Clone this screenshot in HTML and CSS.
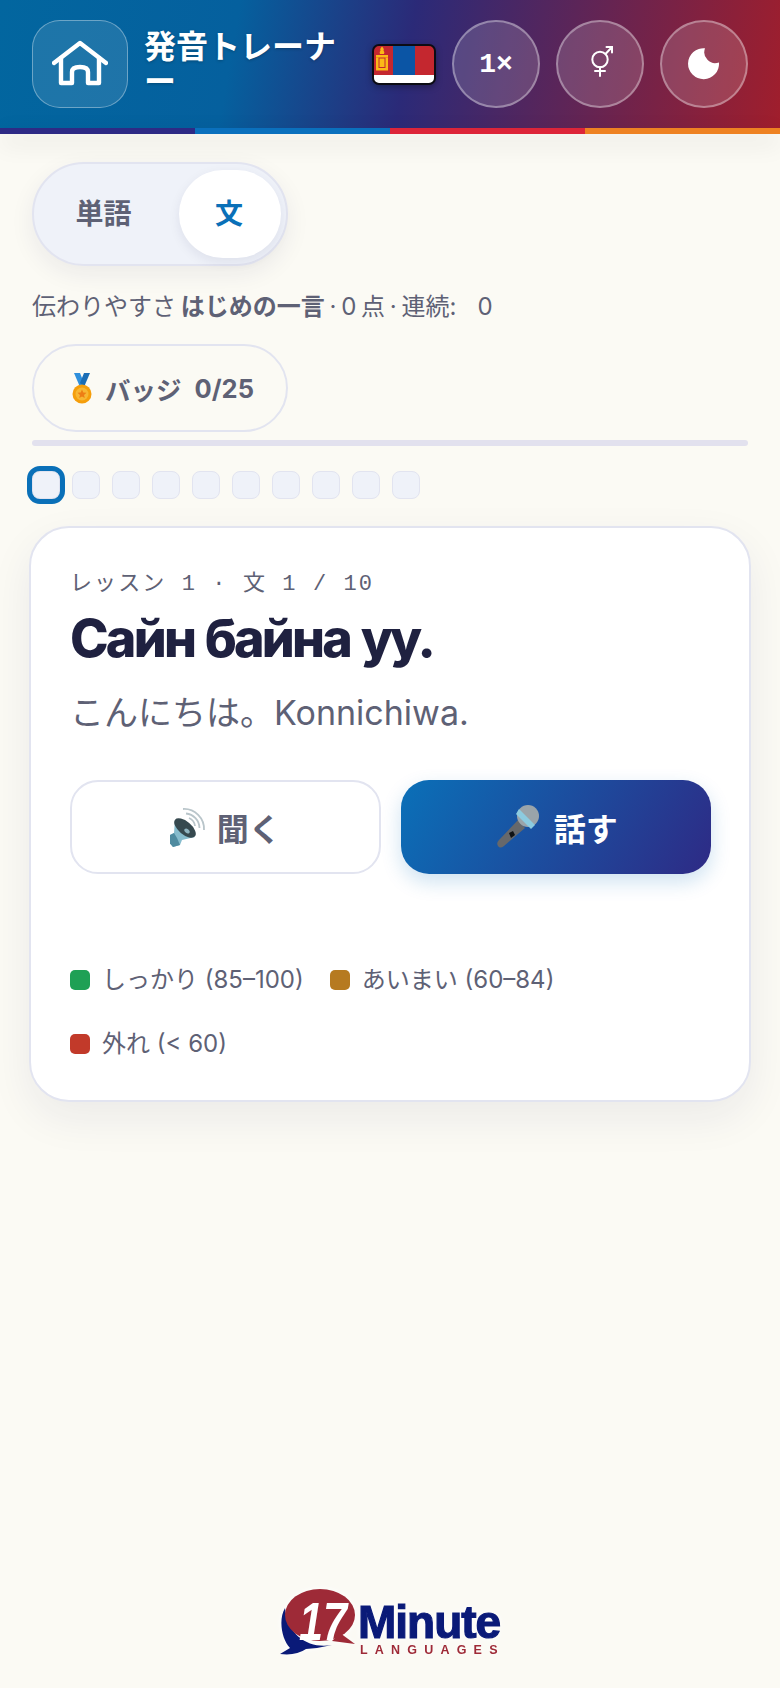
FILE: index.html
```html
<!DOCTYPE html>
<html lang="ja">
<head>
    <meta charset="UTF-8">
    <meta name="viewport" content="width=device-width, initial-scale=1.0">
    <title>発音トレーナー</title>
    <link rel="stylesheet" href="styles.css">
</head>
<body>

<!-- Header -->
<header class="app-header">
    <a href="#" class="home-btn" aria-label="ホーム">
        <svg width="56" height="48" viewBox="0 0 56 48" fill="none" stroke="#fff" stroke-width="4.400" stroke-linecap="round" stroke-linejoin="round">
            <path d="M2 23 L28 3 L54 23"/>
            <path d="M9 18 V43 H20 V32 Q20 27 28 27 Q36 27 36 32 V43 H47 V18"/>
        </svg>
    </a>
    <h1 class="app-title">発音トレーナー</h1>
    <svg class="flag" width="64" height="41" viewBox="0 0 64 41">
        <rect x="1" y="1" width="62" height="39" rx="6" fill="#fff"/>
        <path d="M7 1 H21 V31 H1 V7 Q1 1 7 1 Z" fill="#c4272f"/>
        <rect x="21" y="1" width="22" height="30" fill="#0b55a5"/>
        <path d="M43 1 H57 Q63 1 63 7 V31 H43 Z" fill="#c4272f"/>
        <g fill="#fbb917">
            <path d="M10 2.500 Q12.500 5 11.500 6.500 Q13 8 12 10 H8 Q7 8 8.500 6.500 Q7.500 5 10 2.500 Z"/>
            <rect x="4" y="11" width="12" height="2.500"/>
            <rect x="4" y="24" width="12" height="2.500"/>
            <rect x="4" y="13.500" width="2.500" height="10.500"/>
            <rect x="13.500" y="13.500" width="2.500" height="10.500"/>
            <rect x="7.500" y="14.500" width="5" height="8.500"/>
        </g>
        <rect x="1" y="1" width="62" height="39" rx="6" fill="none" stroke="#0c0c14" stroke-width="2"/>
    </svg>
    <button class="round-btn speed-btn">1×</button>
    <button class="round-btn" aria-label="性別">
        <svg width="40" height="44" viewBox="0 0 40 44" fill="none" stroke="#fff" stroke-width="2" stroke-linecap="round">
            <circle cx="20" cy="17.500" r="7.700"/>
            <path d="M20 25 V34 M15 29 H25"/>
            <path d="M25.500 12 L32 5 M26.500 5 H32 V10.500"/>
        </svg>
    </button>
    <button class="round-btn" aria-label="ダークモード">
        <svg width="32" height="32" viewBox="0 0 32 32">
            <path d="M17 .3 A15.500 15.500 0 1 0 31 14.500 A11 11 0 0 1 17 .3 Z" fill="#fff"/>
        </svg>
    </button>
</header>
<div class="stripe">
    <span class="s1"></span><span class="s2"></span><span class="s3"></span><span class="s4"></span>
</div>

<main class="content">
    <!-- Mode switch -->
    <div class="mode-toggle">
        <button class="mode-btn">単語</button>
        <button class="mode-btn active">文</button>
    </div>

    <p class="stats">伝わりやすさ <b>はじめの一言</b> · 0 点 · 連続:<span class="streak">0</span></p>

    <button class="badge-btn">
        <svg width="20" height="31" viewBox="0 0 20 31">
            <path d="M2 0 H8 L12 10 L8 14 Z" fill="#2f8fdc"/>
            <path d="M18 0 H12 L8 10 L12 14 Z" fill="#1a6db5"/>
            <circle cx="10" cy="21" r="9.500" fill="#f59e0b"/>
            <circle cx="10" cy="21" r="6.500" fill="#f7b733"/>
            <path d="M10 16.500 L11.300 19.500 L14.500 19.800 L12 22 L12.800 25 L10 23.400 L7.200 25 L8 22 L5.500 19.800 L8.700 19.500 Z" fill="#ee7d14"/>
        </svg>
        <span>バッジ</span><span>0/25</span>
    </button>

    <div class="progress"></div>

    <div class="steps">
        <span class="step current"></span>
        <span class="step"></span>
        <span class="step"></span>
        <span class="step"></span>
        <span class="step"></span>
        <span class="step"></span>
        <span class="step"></span>
        <span class="step"></span>
        <span class="step"></span>
        <span class="step"></span>
    </div>

    <!-- Card -->
    <section class="card">
        <div class="kicker">レッスン 1 · 文 1 / 10</div>
        <h2 class="phrase">Сайн байна уу.</h2>
        <p class="translation">こんにちは。Konnichiwa.</p>

        <div class="actions">
            <button class="action listen">
                <svg width="40" height="44" viewBox="2 -3 40 44" fill="none">
                    <path d="M15 1 A20 20 0 0 1 36 22" stroke="#b9c5ca" stroke-width="1.800"/>
                    <path d="M18 5.500 A15 15 0 0 1 31.500 20" stroke="#b9c5ca" stroke-width="1.800"/>
                    <path d="M21 10 A10 10 0 0 1 27 18" stroke="#b9c5ca" stroke-width="1.800"/>
                    <path d="M7 12 L27 29 L14 32 L12 37 L5 39 L0 33 L2 27 L6 25 Z" fill="#86bccd"/>
                    <path d="M0 33 L2 27 L6 25 L9 30 L12 37 L5 39 Z" fill="#4f8ba0"/>
                    <ellipse cx="17" cy="20" rx="13" ry="6.500" transform="rotate(40 17 20)" fill="#36494f"/>
                    <ellipse cx="19" cy="23" rx="3" ry="2" transform="rotate(40 19 23)" fill="#8fb4c0"/>
                </svg>
                <span>聞く</span>
            </button>
            <button class="action speak">
                <svg width="44" height="46" viewBox="6 9 44 46">
                    <path d="M28 25 L35 33 L14 51 Q10 54 8 51 Q6 48 9 45 Z" fill="#66686b"/>
                    <path d="M19 38 L23 36 L25 40 L21 43 Z" fill="#101214"/>
                    <circle cx="38" cy="21" r="11" fill="#9aa4aa"/>
                    <path d="M29 14 L45 30 L41 34 L26 19 Z" fill="#8ccbe0"/>
                </svg>
                <span>話す</span>
            </button>
        </div>

        <div class="legend">
            <span class="legend-item"><i class="dot green"></i>しっかり (85–100)</span>
            <span class="legend-item"><i class="dot amber"></i>あいまい (60–84)</span>
            <span class="legend-item"><i class="dot red"></i>外れ (&lt; 60)</span>
        </div>
    </section>
</main>

<!-- Logo -->
<footer class="brand">
    <svg width="240" height="78" viewBox="0 0 240 78">
        <path d="M15 23 C8 35 12 55 20 63 L10 69 Q26 71 36 64 Q50 63 62 60 C40 64 18 52 15 23 Z" fill="#0a1a78"/>
        <ellipse cx="50" cy="30" rx="35" ry="26" fill="#9e2a37"/>
        <path d="M70 48 L85 59 L62 56 Z" fill="#9e2a37"/>
        <text x="29" y="55" class="logo-num" textLength="48" lengthAdjust="spacingAndGlyphs">17</text>
        <text x="88" y="53" class="logo-word">Minute</text>
        <text x="90" y="69" class="logo-sub">LANGUAGES</text>
    </svg>
</footer>

</body>
</html>
```
FILE: styles.css
```css
/* General */
* {
    box-sizing: border-box;
}

html,
body {
    height: 100%;
}

body {
    margin: 0;
    display: flex;
    flex-direction: column;
    background: #fbfaf4;
    color: #5e6175;
    font-family: Inter, "Noto Sans CJK JP", sans-serif;
    overflow: hidden;
}

button {
    font-family: inherit;
    cursor: pointer;
}

/* Header */
.app-header {
    height: 128px;
    display: flex;
    align-items: center;
    gap: 16px;
    padding: 0 32px;
    background: linear-gradient(100deg, #02669f 0%, #05609e 30%, #2b2a78 52%, #a01e2c 100%);
}

.home-btn {
    flex: 0 0 96px;
    height: 88px;
    display: flex;
    align-items: center;
    justify-content: center;
    background: rgba(255, 255, 255, 0.11);
    border: 1.500px solid rgba(255, 255, 255, 0.35);
    border-radius: 28px;
}

.app-title {
    flex: 1;
    margin: 0;
    color: #fff;
    font-size: 32px;
    font-weight: 600;
    line-height: 35px;
    text-shadow: 0 1px 3px rgba(0, 0, 0, 0.25);
}

.flag {
    flex: none;
    filter: drop-shadow(0 2px 3px rgba(0, 0, 0, 0.3));
}

.round-btn {
    flex: 0 0 88px;
    height: 88px;
    display: flex;
    align-items: center;
    justify-content: center;
    padding: 0;
    color: #fff;
    background: rgba(255, 255, 255, 0.15);
    border: 2px solid rgba(255, 255, 255, 0.35);
    border-radius: 50%;
}

.speed-btn {
    font-family: "Liberation Mono", monospace;
    font-size: 28px;
    font-weight: 700;
}

/* Colour strip under the header */
.stripe {
    height: 6px;
    display: flex;
    box-shadow: 0 8px 24px rgba(0, 0, 0, 0.14);
}

.stripe span {
    flex: 1;
}

.s1 { background: #2e2a85; }
.s2 { background: #0a70bd; }
.s3 { background: #dd2539; }
.s4 { background: #ee8222; }

/* Content */
.content {
    padding: 28px 32px 0;
}

.mode-toggle {
    width: 256px;
    height: 104px;
    display: flex;
    align-items: center;
    padding: 0 5px 0 0;
    background: #eff2f9;
    border: 2px solid #e2e4f0;
    border-radius: 52px;
    box-shadow: 0 8px 24px rgba(30, 30, 80, 0.07);
}

.mode-btn {
    flex: 1;
    height: 88px;
    padding: 0 6px 5px 0;
    color: #5e6175;
    background: none;
    border: none;
    border-radius: 44px;
    font-size: 28px;
    font-weight: 700;
}

.mode-btn.active {
    flex: 0 0 102px;
    padding: 0 2px 5px 0;
    color: #0a70b8;
    background: #fff;
    box-shadow: 0 4px 12px rgba(30, 30, 80, 0.08);
}

.stats {
    margin: 24px 0 0;
    font-size: 24px;
    line-height: 34px;
    word-spacing: -2px;
}

.stats b {
    font-weight: 700;
}

.streak {
    margin-left: 21px;
}

.badge-btn {
    width: 256px;
    height: 88px;
    display: flex;
    align-items: center;
    gap: 13px;
    margin-top: 20px;
    padding: 0 0 0 38px;
    color: #5e6175;
    background: none;
    border: 2px solid #e2e4f0;
    border-radius: 44px;
    font-size: 25.500px;
    font-weight: 700;
}

.progress {
    height: 6px;
    margin-top: 8px;
    background: #e2e1ee;
    border-radius: 3px;
}

.steps {
    display: flex;
    gap: 12px;
    margin-top: 25px;
}

.step {
    width: 28px;
    height: 28px;
    background: #eff2f9;
    border: 1.500px solid #e2e4f0;
    border-radius: 8px;
}

.step.current {
    outline: 5px solid #0a70b8;
    outline-offset: 0;
}

/* Card */
.card {
    height: 576px;
    margin: 27px -3px 0;
    padding: 41px 38px 0 39px;
    background: #fff;
    border: 2px solid #e2e4f0;
    border-radius: 40px;
    box-shadow: 0 16px 44px rgba(30, 30, 80, 0.07);
}

.kicker {
    font-family: "Liberation Mono", "Noto Sans CJK JP", monospace;
    font-size: 22px;
    line-height: 32px;
    letter-spacing: 2.100px;
}

.phrase {
    margin: 3px 0 0;
    color: #1f2140;
    font-size: 52px;
    font-weight: 800;
    line-height: 70px;
    letter-spacing: -2.800px;
    word-spacing: 2px;
}

.translation {
    margin: 14px 0 0;
    font-size: 34px;
    line-height: 50px;
}

.actions {
    display: grid;
    grid-template-columns: 1fr 1fr;
    gap: 20px;
    margin-top: 42px;
}

.action {
    height: 94px;
    display: flex;
    align-items: center;
    justify-content: center;
    gap: 7px;
    padding: 0;
    border-radius: 28px;
    font-size: 32px;
    font-weight: 600;
}

.listen {
    color: #5e6175;
    background: #fff;
    border: 2px solid #e2e4f0;
}

.speak {
    gap: 14px;
    padding-left: 2px;
    color: #fff;
    background: linear-gradient(120deg, #0a70b8, #2e2a85);
    border: none;
    box-shadow: 0 8px 20px rgba(10, 112, 184, 0.2);
}

.legend {
    display: flex;
    flex-wrap: wrap;
    gap: 30px 26px;
    margin-top: 89px;
}

.legend-item {
    display: flex;
    align-items: center;
    gap: 12px;
    font-size: 24px;
    line-height: 34px;
}

.dot {
    width: 20px;
    height: 20px;
    border-radius: 5px;
}

.green { background: #1fa055; }
.amber { background: #b67a20; }
.red { background: #c23a2a; }

/* Logo at the bottom */
.brand {
    margin-top: auto;
    display: flex;
    justify-content: center;
    padding-bottom: 25px;
}

.brand svg {
    filter: drop-shadow(0 0 3px #fff);
}

.logo-num {
    fill: #fff;
    font-family: "Liberation Sans", sans-serif;
    font-size: 53px;
    font-weight: 700;
    font-style: italic;
}

.logo-word {
    fill: #0a1a78;
    font-family: "Liberation Sans", sans-serif;
    font-size: 46px;
    font-weight: 700;
    letter-spacing: -1px;
    stroke: #0a1a78;
    stroke-width: 1.200;
}

.logo-sub {
    fill: #9e2a37;
    font-family: "Liberation Sans", sans-serif;
    font-size: 12.500px;
    font-weight: 700;
    letter-spacing: 7.200px;
}
```
